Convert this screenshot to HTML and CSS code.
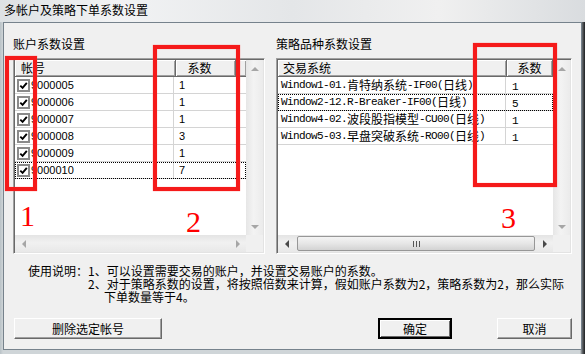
FILE: index.html
```html
<!DOCTYPE html>
<html lang="zh-CN">

<head>
    <meta charset="UTF-8">
    <title>多帐户及策略下单系数设置</title>
    <link rel="stylesheet" href="styles.css">
</head>

<body>
    <div class="window">
        <div class="titlebar">多帐户及策略下单系数设置</div>

        <div class="client">
            <div class="panels">
                <section class="panel">
                    <div class="panel-label">账户系数设置</div>
                    <div class="listbox listbox-account">
                        <div class="list-view">
                            <div class="list-header">
                                <div class="hcell h-name">帐号</div>
                                <div class="hcell h-value">系数</div>
                                <div class="hcell h-filler"></div>
                            </div>
                            <div class="row">
                                <div class="cell c-name"><span class="check"><svg viewBox="0 0 9 9"><path d="M1.3 4.6 L3.6 6.9 L7.8 1.8" /></svg></span>9000005</div>
                                <div class="cell c-value">1</div>
                            </div>
                            <div class="row">
                                <div class="cell c-name"><span class="check"><svg viewBox="0 0 9 9"><path d="M1.3 4.6 L3.6 6.9 L7.8 1.8" /></svg></span>9000006</div>
                                <div class="cell c-value">1</div>
                            </div>
                            <div class="row">
                                <div class="cell c-name"><span class="check"><svg viewBox="0 0 9 9"><path d="M1.3 4.6 L3.6 6.9 L7.8 1.8" /></svg></span>9000007</div>
                                <div class="cell c-value">1</div>
                            </div>
                            <div class="row">
                                <div class="cell c-name"><span class="check"><svg viewBox="0 0 9 9"><path d="M1.3 4.6 L3.6 6.9 L7.8 1.8" /></svg></span>9000008</div>
                                <div class="cell c-value">3</div>
                            </div>
                            <div class="row">
                                <div class="cell c-name"><span class="check"><svg viewBox="0 0 9 9"><path d="M1.3 4.6 L3.6 6.9 L7.8 1.8" /></svg></span>9000009</div>
                                <div class="cell c-value">1</div>
                            </div>
                            <div class="row focused">
                                <div class="cell c-name"><span class="check"><svg viewBox="0 0 9 9"><path d="M1.3 4.6 L3.6 6.9 L7.8 1.8" /></svg></span>9000010</div>
                                <div class="cell c-value">7</div>
                            </div>
                        </div>
                        <div class="vscroll">
                            <span class="arrow arrow-up"></span>
                            <span class="arrow arrow-down"></span>
                        </div>
                        <div class="hscroll">
                            <span class="arrow arrow-left"></span>
                            <span class="arrow arrow-right"></span>
                        </div>
                        <div class="corner"></div>
                    </div>
                </section>

                <section class="panel">
                    <div class="panel-label">策略品种系数设置</div>
                    <div class="listbox listbox-strategy">
                        <div class="list-view">
                            <div class="list-header">
                                <div class="hcell h-name">交易系统</div>
                                <div class="hcell h-value">系数</div>
                            </div>
                            <div class="row">
                                <div class="cell c-name"><span class="en">Window1-01.</span>肯特纳系统<span class="en">-IF00(</span>日线<span class="en">)</span></div>
                                <div class="cell c-value"><span class="en">1</span></div>
                            </div>
                            <div class="row focused">
                                <div class="cell c-name"><span class="en">Window2-12.R-Breaker-IF00(</span>日线<span class="en">)</span></div>
                                <div class="cell c-value"><span class="en">5</span></div>
                            </div>
                            <div class="row">
                                <div class="cell c-name"><span class="en">Window4-02.</span>波段股指模型<span class="en">-CU00(</span>日线<span class="en">)</span></div>
                                <div class="cell c-value"><span class="en">1</span></div>
                            </div>
                            <div class="row">
                                <div class="cell c-name"><span class="en">Window5-03.</span>早盘突破系统<span class="en">-RO00(</span>日线<span class="en">)</span></div>
                                <div class="cell c-value"><span class="en">1</span></div>
                            </div>
                        </div>
                        <div class="vscroll">
                            <span class="arrow arrow-up"></span>
                            <span class="arrow arrow-down"></span>
                        </div>
                        <div class="hscroll active">
                            <span class="arrow arrow-left"></span>
                            <div class="thumb"><span class="grip"></span></div>
                            <span class="arrow arrow-right"></span>
                        </div>
                        <div class="corner"></div>
                    </div>
                </section>
            </div>

            <div class="usage">
                <span class="usage-title">使用说明：</span>
                <ol class="usage-list">
                    <li>1、可以设置需要交易的账户，并设置交易账户的系数。</li>
                    <li>2、对于策略系数的设置，将按照倍数来计算，假如账户系数为2，策略系数为2，那么实际<br>下单数量等于4。</li>
                </ol>
            </div>

            <div class="actions">
                <button class="btn btn-delete">删除选定帐号</button>
                <button class="btn btn-ok">确定</button>
                <button class="btn btn-cancel">取消</button>
            </div>
        </div>

        <!-- red marks drawn over the screenshot -->
        <div class="mark mark-1"></div>
        <div class="mark mark-2"></div>
        <div class="mark mark-3"></div>
        <span class="mark-num num-1">1</span>
        <span class="mark-num num-2">2</span>
        <span class="mark-num num-3">3</span>
    </div>
</body>

</html>
```

FILE: styles.css
```css
* {
    margin: 0;
    padding: 0;
    box-sizing: border-box;
}

body {
    width: 585px;
    height: 354px;
    overflow: hidden;
    background: linear-gradient(90deg, #b9c2c7 0, #cfd5d8 3px, #cfd5d8 580px, #6a6f73 582px, #1c1e20 585px);
    color: #000;
    font-family: "Noto Sans CJK SC", sans-serif;
    font-size: 12px;
}

.window {
    position: relative;
    height: 354px;
}

.titlebar {
    height: 22px;
    padding-left: 4px;
    line-height: 20px;
    background: linear-gradient(90deg, #dde1e4, #f2f3f4 20%, #e4e6e8 50%, #f0f0f0 75%, #d9dcdf);
}

.client {
    display: flex;
    flex-direction: column;
    width: 579px;
    height: 328px;
    margin-left: 3px;
    padding: 14px 9px 0;
    border: 1px solid #76828c;
    background: #f0f0f0;
}

.panels {
    display: flex;
    gap: 11px;
}

.panel-label {
    height: 14px;
    line-height: 14px;
    margin-bottom: 7px;
}

/* list box with sunken border and scroll bars */
.listbox {
    display: grid;
    grid-template-columns: 1fr 17px;
    grid-template-rows: 1fr 17px;
    height: 196px;
    padding: 1px;
    border: 1px solid;
    border-color: #a0a0a0 #fff #fff #a0a0a0;
    box-shadow: inset 1px 1px #696969, inset -1px -1px #e3e3e3;
    background: #fff;
}

.listbox-account {
    width: 252px;
}

.listbox-strategy {
    width: 296px;
}

.list-view {
    overflow: hidden;
    background: #fff;
}

.list-header {
    display: flex;
    height: 17px;
}

.hcell {
    height: 17px;
    line-height: 16px;
    background: #f0f0f0;
    border-right: 1px solid #696969;
    border-bottom: 1px solid #696969;
    box-shadow: inset 1px 1px #fff, inset -1px -1px #a0a0a0;
}

.h-name {
    padding-left: 6px;
}

.h-value {
    text-align: center;
}

.h-filler {
    flex: 1;
    border-right: none;
}

.listbox-account .h-name {
    width: 161px;
}

.listbox-account .h-value {
    width: 60px;
    padding-right: 12px;
}

.listbox-strategy .h-name {
    width: 229px;
    padding-left: 5px;
}

.listbox-strategy .h-value {
    flex: 1;
}

.row {
    display: flex;
    height: 17px;
    border-bottom: 1px solid #d4d4d4;
    line-height: 16px;
}

.row.focused {
    outline: 1px dotted #000;
    outline-offset: -1px;
}

.cell {
    white-space: nowrap;
    overflow: hidden;
}

.c-name {
    display: flex;
    align-items: center;
    border-right: 1px solid #d4d4d4;
}

.c-value {
    flex: 1;
}

.listbox-account .row {
    font-family: "Liberation Sans", "Noto Sans CJK SC", sans-serif;
    font-size: 11px;
}

.listbox-account .c-name {
    width: 159px;
    padding-left: 2px;
}

.listbox-account .c-value {
    padding-left: 5px;
}

.listbox-strategy .c-name {
    width: 228px;
    padding-left: 3px;
}

.listbox-strategy .c-value {
    padding-left: 6px;
}

.en {
    font-family: "Liberation Mono", monospace;
    font-size: 11px;
    letter-spacing: -0.6px;
}

.check {
    display: inline-flex;
    align-items: center;
    justify-content: center;
    width: 13px;
    height: 13px;
    margin-right: 1px;
    border: 2px solid #8a8a8a;
    background: #fff;
}

.check svg {
    width: 9px;
    height: 9px;
    fill: none;
    stroke: #000;
    stroke-width: 1.9;
}

/* scroll bars */
.vscroll {
    display: flex;
    flex-direction: column;
    justify-content: space-between;
    align-items: center;
    padding: 7px 0 6px;
    background: linear-gradient(90deg, #e6e6e6, #f3f3f3 45%, #ebebeb);
}

.hscroll {
    display: flex;
    align-items: center;
    justify-content: space-between;
    padding: 0 6px 0 7px;
    background: linear-gradient(#e4e4e4, #f1f1f1 45%, #e8e8e8);
}

.corner {
    background: #f0f0f0;
}

.arrow {
    width: 0;
    height: 0;
    border-style: solid;
    border-color: transparent;
}

.arrow-up {
    border-width: 0 4px 4px;
    border-bottom-color: #a6a6a6;
}

.arrow-down {
    border-width: 4px 4px 0;
    border-top-color: #a6a6a6;
}

.arrow-left {
    border-width: 4px 4px 4px 0;
    border-right-color: #a6a6a6;
}

.arrow-right {
    border-width: 4px 0 4px 4px;
    border-left-color: #a6a6a6;
}

.hscroll.active .arrow-left {
    border-right-color: #4a4a4a;
}

.hscroll.active .arrow-right {
    border-left-color: #4a4a4a;
}

.thumb {
    display: flex;
    align-items: center;
    justify-content: center;
    width: 238px;
    height: 15px;
    border: 1px solid #979797;
    border-radius: 2px;
    background: linear-gradient(#f4f4f4, #e6e6e6 50%, #d3d3d3);
}

.grip {
    width: 7px;
    height: 6px;
    background: linear-gradient(90deg, #555 1px, transparent 1px) 0 0 / 3px 6px repeat-x;
}

/* usage text */
.usage {
    display: flex;
    margin: 10px 0 0 15px;
    line-height: 13px;
}

.usage-list {
    list-style: none;
}

.usage-list li {
    padding-left: 16px;
    text-indent: -16px;
}

.actions {
    display: flex;
    margin-top: 15px;
    padding-left: 1px;
}

.btn {
    height: 21px;
    font-family: inherit;
    font-size: 12px;
    background: #f0f0f0;
    border: 1px solid;
    border-color: #fff #696969 #696969 #fff;
    box-shadow: inset -1px -1px #a0a0a0;
}

.btn-delete {
    width: 148px;
}

.btn-ok {
    width: 74px;
    margin-left: auto;
    outline: 1px solid #000;
    outline-offset: -1px;
    border-width: 2px;
    border-color: #000;
    box-shadow: inset 1px 1px #fff, inset -1px -1px #696969;
}

.btn-cancel {
    width: 75px;
    margin-left: 45px;
}

/* annotations */
.mark {
    position: absolute;
    border: 4px solid #f51a1a;
    box-shadow: 0 0 1px #ff6a6a, inset 0 0 1px #ff6a6a;
}

.mark-1 {
    left: 5px;
    top: 56px;
    width: 32px;
    height: 135px;
}

.mark-2 {
    left: 153px;
    top: 45px;
    width: 87px;
    height: 146px;
}

.mark-3 {
    left: 473px;
    top: 43px;
    width: 84px;
    height: 144px;
}

.mark-num {
    position: absolute;
    color: #f00;
    font-family: "Liberation Serif", serif;
    font-size: 30px;
    line-height: 30px;
}

.num-1 {
    left: 20px;
    top: 201px;
}

.num-2 {
    left: 186px;
    top: 207px;
}

.num-3 {
    left: 501px;
    top: 203px;
}
```
